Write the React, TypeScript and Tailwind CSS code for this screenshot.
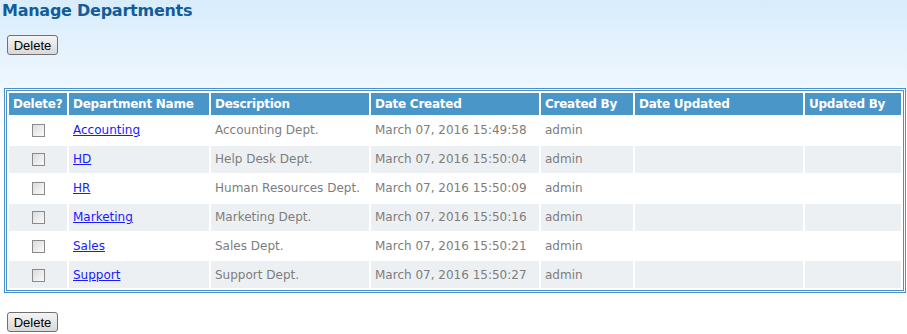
import React from "react";

const rows = [
  { name: "Accounting", desc: "Accounting Dept.", date: "March 07, 2016 15:49:58" },
  { name: "HD", desc: "Help Desk Dept.", date: "March 07, 2016 15:50:04" },
  { name: "HR", desc: "Human Resources Dept.", date: "March 07, 2016 15:50:09" },
  { name: "Marketing", desc: "Marketing Dept.", date: "March 07, 2016 15:50:16" },
  { name: "Sales", desc: "Sales Dept.", date: "March 07, 2016 15:50:21" },
  { name: "Support", desc: "Support Dept.", date: "March 07, 2016 15:50:27" },
];

function DelButton() {
  return (
    <button
      type="button"
      className="h-[20px] w-[51px] rounded-[3px] border border-[#707070] bg-gradient-to-b from-[#f4f4f4] to-[#d9d9d9] text-[13px] leading-none text-black"
      style={{ fontFamily: '"Liberation Sans", Arial, sans-serif' }}
    >
      Delete
    </button>
  );
}

function Check() {
  return (
    <span className="inline-block h-[13px] w-[13px] border border-[#8a8a8a] bg-gradient-to-br from-[#dcdcdc] to-[#fbfbfb] align-middle" />
  );
}

export default function App() {
  const th = "h-[22px] bg-[#4b96c8] px-[4px] text-left align-middle font-bold tracking-[-0.25px] text-white";
  const td = "h-[26.9px] px-[4px] align-middle text-[#7d7d7d]";
  return (
    <div
      className="min-h-[334px] w-[907px] bg-[linear-gradient(#d8ecfc_0px,#eef7fe_85px,#ffffff_110px)] text-[12px]"
      style={{ fontFamily: '"DejaVu Sans", Verdana, sans-serif' }}
    >
      <h1 className="pl-[2px] pt-[1px] text-[16px] font-bold leading-[19px] tracking-[-0.25px] text-[#125d99]">
        Manage Departments
      </h1>
      <div className="pl-[7px] pt-[15px]">
        <DelButton />
      </div>
      <div className="pl-[4px] pt-[33px]">
        <table className="w-[902px] table-fixed border-separate border-spacing-[2px] border-[3px] border-double border-[#4a8fc6] bg-white">
          <colgroup>
            <col className="w-[58px]" />
            <col className="w-[140px]" />
            <col className="w-[158px]" />
            <col className="w-[168px]" />
            <col className="w-[92px]" />
            <col className="w-[168px]" />
            <col className="w-[96px]" />
          </colgroup>
          <thead>
            <tr>
              <th className={th}>Delete?</th>
              <th className={th}>Department Name</th>
              <th className={th}>Description</th>
              <th className={th}>Date Created</th>
              <th className={th}>Created By</th>
              <th className={th}>Date Updated</th>
              <th className={th}>Updated By</th>
            </tr>
          </thead>
          <tbody>
            {rows.map((r, i) => (
              <tr key={r.name} className={i % 2 === 1 ? "bg-[#edf0f3]" : "bg-white"}>
                <td className={td + " text-center"}>
                  <Check />
                </td>
                <td className={td}>
                  <a href="#" className="text-[#1a1aff] underline">
                    {r.name}
                  </a>
                </td>
                <td className={td}>{r.desc}</td>
                <td className={td + " whitespace-nowrap"}>{r.date}</td>
                <td className={td}>admin</td>
                <td className={td}></td>
                <td className={td}></td>
              </tr>
            ))}
          </tbody>
        </table>
      </div>
      <div className="pl-[7px] pt-[19px]">
        <DelButton />
      </div>
    </div>
  );
}
